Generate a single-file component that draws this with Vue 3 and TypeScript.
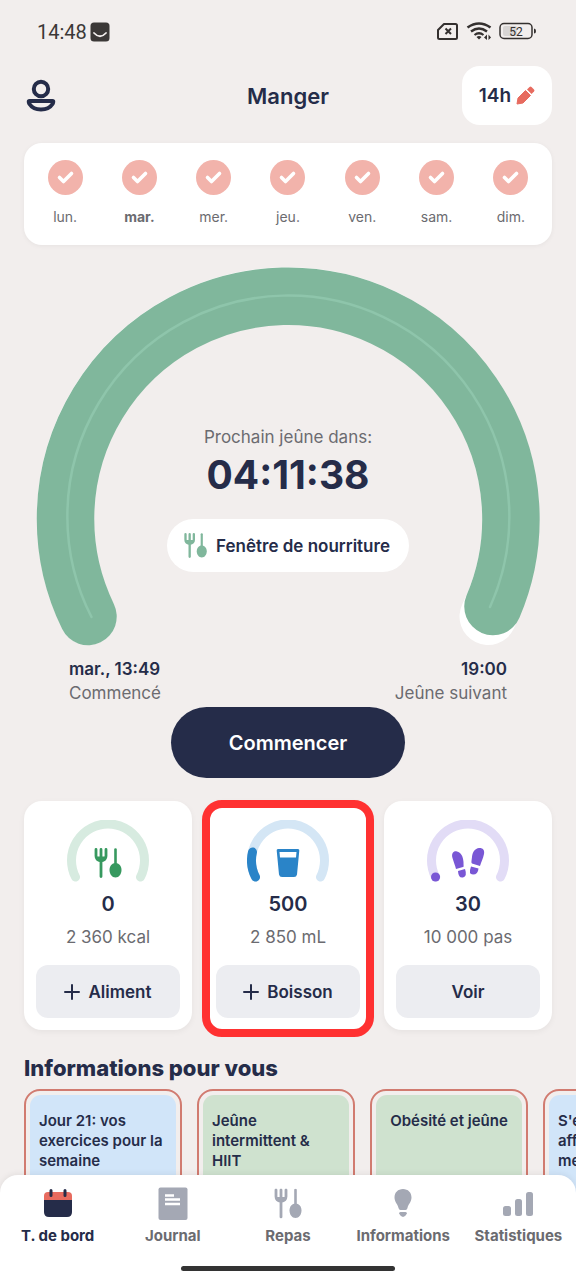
<script setup lang="ts">
import { ref } from 'vue'

interface Day { label: string; current: boolean }
interface Stat {
  id: 'food' | 'drink' | 'steps'
  value: string
  goal: string
  action: string
  plus: boolean
  track: string
  tint: string
  progress: string
  selected: boolean
}
interface Article { title: string; tone: 'blue' | 'green'; centered: boolean }
interface Tab { id: string; label: string }

const days: Day[] = ['lun.', 'mar.', 'mer.', 'jeu.', 'ven.', 'sam.', 'dim.'].map((label) => ({
  label,
  current: label === 'mar.',
}))

const stats: Stat[] = [
  { id: 'food', value: '0', goal: '2 360 kcal', action: 'Aliment', plus: true, track: '#d7ebe0', tint: '#37995f', progress: '', selected: false },
  { id: 'drink', value: '500', goal: '2 850 mL', action: 'Boisson', plus: true, track: '#d4e6f5', tint: '#2a84c8', progress: 'M8.5 57A36.5 36.5 0 0 1 5.5 32', selected: true },
  { id: 'steps', value: '30', goal: '10 000 pas', action: 'Voir', plus: false, track: '#e2dcf6', tint: '#7957d5', progress: 'M8.5 57h0.1', selected: false },
]

const articles: Article[] = [
  { title: 'Jour 21: vos exercices pour la semaine', tone: 'blue', centered: false },
  { title: 'Jeûne intermittent & HIIT', tone: 'green', centered: false },
  { title: 'Obésité et jeûne', tone: 'green', centered: true },
  { title: "S'entraîner affamé est-il meilleur ?", tone: 'blue', centered: false },
]

const tabs: Tab[] = [
  { id: 'home', label: 'T. de bord' },
  { id: 'journal', label: 'Journal' },
  { id: 'meals', label: 'Repas' },
  { id: 'info', label: 'Informations' },
  { id: 'stats', label: 'Statistiques' },
]
const activeTab = ref('home')
</script>

<template>
  <div class="app">
    <svg class="defs" aria-hidden="true">
      <symbol id="cutlery" viewBox="0 0 28 30">
        <path d="M2 1.500V8Q2 12 7 13Q12 12 12 8V1.500M7 1.500V28.500" fill="none" stroke="currentColor" stroke-width="2.800" stroke-linecap="round" />
        <path d="M2.500 8.500h9Q12 13.500 7 13.500T2.500 8.500z" fill="currentColor" />
        <path d="M21.500 1.500V18" fill="none" stroke="currentColor" stroke-width="2.600" stroke-linecap="round" />
        <path d="M21.500 15C25 15 27.500 18 27.500 22S25 29.500 21.500 29.500 15.500 26 15.500 22 18 15 21.500 15z" fill="currentColor" />
      </symbol>
    </svg>

    <main class="content">
      <div class="status">
        <span class="clock">14:48</span>
        <svg class="smile" viewBox="0 0 20 20"><rect x="0.500" y="0.500" width="19" height="19" rx="3.500" fill="#3b3837" /><path d="M4 11Q10 17.500 16 11" fill="none" stroke="#f3efee" stroke-width="1.800" stroke-linecap="round" /></svg>
        <svg class="indicators" viewBox="0 0 100 20">
          <g fill="none" stroke="#34302f">
            <path d="M7 2H18.500Q20 2 20 3.500V15.500Q20 17 18.500 17H2.500Q1 17 1 15.500V8z" stroke-width="2" stroke-linejoin="round" />
            <path d="M8.500 6.500L14 12M14 6.500L8.500 12" stroke-width="2" />
            <path d="M30.500 5.500Q42 -2.500 53.500 5.500" stroke-width="2.600" />
            <path d="M34 9.500Q42 3.500 50 9.500" stroke-width="2.400" />
            <path d="M37.500 13Q42 9.500 46.500 13" stroke-width="2.200" />
            <rect x="63" y="1.500" width="32" height="15" rx="4" stroke-width="1.500" />
          </g>
          <path d="M39.500 15Q42 13 44.500 15L42 17.500zM50 12.500V18L47 15.500zM51.500 12.500V18L54 15.500z" fill="#34302f" />
          <rect x="66" y="4" width="14" height="10" rx="2" fill="#d8d5d4" />
          <path d="M97 6.500q2 0 2 2.500t-2 2.500z" fill="#34302f" />
          <text x="79" y="13.500" text-anchor="middle" class="charge">52</text>
        </svg>
      </div>

      <header class="header">
        <button class="profile" type="button" aria-label="Profil">
          <svg viewBox="0 0 30 34"><g fill="none" stroke="#252c49" stroke-width="4"><circle cx="15" cy="10" r="7.200" /><path d="M3.500 22H26.500Q28 22 26.500 25 23 30.500 15 30.500T3.500 25Q2 22 3.500 22z" stroke-linejoin="round" /></g></svg>
        </button>
        <h1>Manger</h1>
        <button class="plan" type="button" aria-label="Modifier le plan 14h">
          <span>14h</span>
          <svg viewBox="0 0 19 19"><g fill="#e76b5f"><path d="M1 18L2 12 9.500 4.500 14.500 9.500 7 17z" stroke="#e76b5f" stroke-linejoin="round" /><path d="M11 3.500L13.500 1Q14.500 0 15.500 1L18 3.500Q19 4.500 18 5.500L15.500 8z" /></g></svg>
        </button>
      </header>

      <section class="week" aria-label="Semaine">
        <div v-for="day in days" :key="day.label" class="day" :class="{ current: day.current }">
          <svg viewBox="0 0 35 35"><circle cx="17.500" cy="17.500" r="17.500" fill="#f2b3ab" /><path d="M11.500 17.500L15.500 21.500 23.500 13.500" fill="none" stroke="#fff" stroke-width="3.600" stroke-linecap="round" stroke-linejoin="round" /></svg>
          <span>{{ day.label }}</span>
        </div>
      </section>

      <section class="timer">
        <svg class="dial" viewBox="24 266 528 380" aria-hidden="true">
          <g fill="none" stroke-linecap="round">
            <path d="M88 616.500A222.700 222.700 0 1 1 488 616.500" stroke="#fff" stroke-width="57" />
            <path d="M88 616.500A222.700 222.700 0 1 1 493 606.500" stroke="#80b79c" stroke-width="57.500" />
            <path d="M91.500 617A221 221 0 1 1 490 607" stroke="#8ec5ab" stroke-width="2.500" />
          </g>
        </svg>
        <div class="reading">
          <p class="caption">Prochain jeûne dans:</p>
          <p class="countdown">04:11:38</p>
          <button class="window" type="button"><svg><use href="#cutlery" /></svg>Fenêtre de nourriture</button>
        </div>
      </section>

      <div class="bounds">
        <p><strong>mar., 13:49</strong><span>Commencé</span></p>
        <p class="end"><strong>19:00</strong><span>Jeûne suivant</span></p>
      </div>

      <button class="start" type="button">Commencer</button>

      <section class="stats">
        <article v-for="stat in stats" :key="stat.id" class="stat" :class="{ selected: stat.selected }">
          <svg class="meter" viewBox="0 0 82 64" :style="{ color: stat.tint }" aria-hidden="true">
            <g fill="none" stroke-width="9" stroke-linecap="round">
              <path d="M8.500 57A36.500 36.500 0 1 1 73.500 57" :stroke="stat.track" />
              <path v-if="stat.progress" :d="stat.progress" stroke="currentColor" />
            </g>
            <use v-if="stat.id === 'food'" href="#cutlery" x="27" y="28" width="28" height="30" />
            <g v-else-if="stat.id === 'drink'" fill="currentColor">
              <path fill-rule="evenodd" d="M31 29H51Q52.500 29 52.300 30.500L50 54.500Q49.500 57 47 57H35Q32.500 57 32 54.500L29.700 30.500Q29.500 29 31 29zM32.500 32L33 37.500H49L49.500 32z" />
            </g>
            <g v-else fill="currentColor">
              <path d="M25.500 38C24 33 27 30.500 30 31.500 34 32.500 36 36 36.500 42 36.500 46 37 47 36 47L29 49C28 45 27 43 25.500 38z" />
              <path d="M31 51L38 49Q40.500 56.500 36 57.500T31 51z" />
              <path d="M57 34C58 29.500 55 27.500 52 28 48 28.500 45.500 32 45 37 44.500 41 44 43 45 43.500L53 46C54.500 41 56 39 57 34z" />
              <path d="M44 46.500L51.500 48.500Q51 54.500 46 54.500T44 46.500z" />
            </g>
          </svg>
          <strong class="value">{{ stat.value }}</strong>
          <span class="goal">{{ stat.goal }}</span>
          <button class="action" type="button">
            <svg v-if="stat.plus" viewBox="0 0 16 16"><path d="M8 1V15M1 8H15" stroke="currentColor" stroke-width="2" stroke-linecap="round" /></svg>
            {{ stat.action }}
          </button>
        </article>
      </section>

      <h2>Informations pour vous</h2>
      <section class="articles">
        <a v-for="article in articles" :key="article.title" href="#" class="article">
          <span class="cover" :class="[article.tone, { centered: article.centered }]">{{ article.title }}</span>
        </a>
      </section>
    </main>

    <nav class="tabs">
      <div class="row">
        <button v-for="tab in tabs" :key="tab.id" type="button" class="tab" :class="{ active: tab.id === activeTab }" @click="activeTab = tab.id">
          <svg viewBox="0 0 34 34" aria-hidden="true">
            <g v-if="tab.id === 'home'">
              <path d="M3 14H31V26Q31 31 26 31H8Q3 31 3 26z" fill="#252c49" />
              <path d="M3 14V10Q3 6 7 6H27Q31 6 31 10V14z" fill="#e76b5f" />
              <path d="M10 4.500V9.500M24 4.500V9.500" stroke="#252c49" stroke-width="3" stroke-linecap="round" />
            </g>
            <g v-else-if="tab.id === 'journal'">
              <rect x="2.500" y="1.500" width="29" height="32.500" rx="2" fill="currentColor" />
              <path d="M9 9.500H18M9 13.500H24M9 18H24" stroke="#fff" stroke-width="2.600" />
            </g>
            <use v-else-if="tab.id === 'meals'" href="#cutlery" x="3" y="2.500" width="28" height="30" />
            <g v-else-if="tab.id === 'info'" fill="currentColor">
              <path d="M17 3C22 3 25.500 6.500 25.500 11.500 25.500 16 22 18.500 21.500 22Q21 24 19.500 24H14.500Q13 24 12.500 22C12 18.500 8.500 16 8.500 11.500 8.500 6.500 12 3 17 3z" />
              <path d="M14.500 26H19.500Q21 26 21 27.500 19 31 17 31T13 27.500Q13 26 14.500 26z" />
            </g>
            <g v-else fill="currentColor">
              <rect x="2" y="20" width="8" height="10" rx="2.500" />
              <rect x="14" y="13" width="7" height="17" rx="2.500" />
              <rect x="25" y="6" width="7" height="24" rx="2.500" />
            </g>
          </svg>
          <span>{{ tab.label }}</span>
        </button>
      </div>
      <div class="handle"></div>
    </nav>
  </div>
</template>

<style>
body { margin: 0; background: #f2eeed; }
</style>

<style scoped>
.app {
  position: relative;
  height: 100vh;
  overflow: hidden;
  background: #f2eeed;
  color: #252c49;
  font-family: Inter, "Open Sans", sans-serif;
}
* { box-sizing: border-box; }
p, h1, h2 { margin: 0; }
button { border: 0; padding: 0; background: none; color: inherit; font: inherit; cursor: pointer; }
svg { display: block; flex: none; }
.defs { position: absolute; width: 0; height: 0; }
.content { display: flex; flex-direction: column; height: 100%; overflow: auto; scrollbar-width: none; padding: 0 24px; }
.content > * { flex: none; }

.status { display: flex; align-items: center; height: 66px; padding: 0 15px 2px 13px; color: #3b3837; }
.clock { font: 20px/24px Roboto, sans-serif; }
.smile { width: 20px; height: 20px; margin-left: 3px; }
.indicators { width: 100px; height: 20px; margin-left: auto; }
.charge { font: 12px Roboto, sans-serif; fill: #34302f; }

.header { display: grid; grid-template-columns: 1fr auto 1fr; align-items: center; }
.profile { justify-self: start; padding-left: 2px; }
.profile svg { width: 30px; height: 34px; }
h1 { font-size: 22px; line-height: 28px; font-weight: 600; }
.plan { justify-self: end; display: flex; align-items: center; justify-content: center; gap: 5px; width: 90px; height: 59px; border-radius: 18px; background: #fff; font-size: 19px; font-weight: 600; }
.plan svg { width: 19px; height: 19px; }

.week { display: flex; margin-top: 18px; padding: 17px 4px 18px; border-radius: 18px; background: #fff; box-shadow: 0 1px 5px #0000000d; }
.day { flex: 1; display: flex; flex-direction: column; align-items: center; gap: 12px; font-size: 14px; line-height: 20px; color: #6b6b70; }
.day svg { width: 35px; height: 35px; }
.current { font-weight: 700; }

.timer { display: grid; margin-top: 21px; }
.dial, .reading { grid-area: 1 / 1; }
.dial { width: 100%; }
.reading { display: flex; flex-direction: column; align-items: center; align-self: end; padding-bottom: 74px; }
.caption { font-size: 17px; line-height: 24px; color: #6b6b70; }
.countdown { margin: 2px 0 20px; font-size: 39px; line-height: 48px; font-weight: 700; }
.window { display: flex; align-items: center; gap: 8px; height: 53px; padding: 0 19px 0 16px; border-radius: 27px; background: #fff; font-size: 17px; font-weight: 600; }
.window svg { width: 25px; height: 25px; color: #80b79c; }

.bounds { display: flex; justify-content: space-between; margin-top: 11px; padding: 0 45px; font-size: 17px; line-height: 24px; }
.bounds p { display: flex; flex-direction: column; }
.bounds strong { font-weight: 600; }
.bounds span { color: #6b6b70; }
.end { text-align: right; }
.start { align-self: center; margin-top: 2px; padding: 0 58px; height: 71px; border-radius: 36px; background: #252c49; color: #fff; font-size: 20px; font-weight: 600; }

.stats { display: grid; grid-template-columns: repeat(3, 1fr); gap: 12px; margin-top: 23px; }
.stat { position: relative; display: flex; flex-direction: column; align-items: center; padding: 19px 12px 12px; border-radius: 18px; background: #fff; box-shadow: 0 2px 6px #0000000d; }
.selected::after { content: ""; position: absolute; inset: -1px -2px -7px; border: 8px solid #ff3131; border-radius: 20px; pointer-events: none; }
.meter { width: 82px; height: 64px; }
.value { margin-top: 7px; font-size: 20px; line-height: 26px; font-weight: 600; }
.goal { margin-top: 8px; font-size: 17px; line-height: 24px; color: #6b6b70; }
.action { display: flex; align-items: center; justify-content: center; gap: 8px; width: 100%; height: 53px; margin-top: 16px; border-radius: 12px; background: #ecedf1; font-size: 17px; font-weight: 600; }
.action svg { width: 16px; height: 16px; }

h2 { margin-top: 24px; font-size: 22px; line-height: 28px; font-weight: 800; }
.articles { display: flex; gap: 15px; margin: 7px -24px 0 0; overflow: hidden; }
.article { flex: none; width: 158px; height: 190px; padding: 4px; border: 2px solid #d17b70; border-radius: 16px; color: #252c49; font-size: 15px; line-height: 20px; font-weight: 600; text-decoration: none; }
.cover { display: block; height: 100%; padding: 16px 9px; border-radius: 11px; }
.blue { background: #d1e5f9; }
.green { background: #cfe2cf; }
.centered { text-align: center; }

.tabs { position: absolute; inset: auto 0 0; padding: 11px 0 9px; border-radius: 18px 18px 0 0; background: #fff; box-shadow: 0 -1px 6px #00000012; }
.row { display: flex; }
.tab { flex: 1 1 0; min-width: 0; display: flex; flex-direction: column; align-items: center; gap: 6px; color: #a4a8b4; font-size: 15px; line-height: 20px; font-weight: 700; }
.tab svg { width: 34px; height: 34px; }
.tab span { color: #6b6b70; }
.active span { color: #252c49; }
.handle { width: 37%; height: 5px; margin: 20px auto 0; border-radius: 3px; background: #333; }
</style>
